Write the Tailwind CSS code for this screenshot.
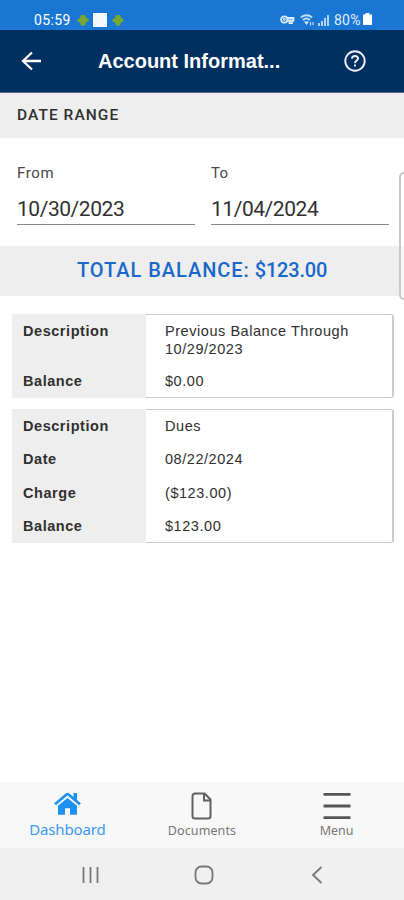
<!DOCTYPE html>
<html lang="en">
<head>
<meta charset="utf-8">
<meta name="viewport" content="width=device-width, initial-scale=1">
<title>Account Information</title>
<script src="https://cdn.jsdelivr.net/npm/@tailwindcss/browser@4"></script>
</head>
<body class="bg-white">
<div class="relative flex h-[900px] w-[404px] flex-col overflow-hidden bg-white font-['Roboto',sans-serif] text-[#303030]">
  <!-- Status bar -->
  <div class="flex h-[30px] shrink-0 items-end bg-[#1976d2] pr-[32px] pl-[34px] text-white">
    <span class="mb-[1px] w-[43px] text-[14px] leading-[18px] tracking-[0.4px]">05:59</span>
    <svg class="mb-[4px] h-[12px] w-[12px]" viewBox="0 0 12 12"><path d="M4 1h4l1 2.500 3 2.500v1L9 8.500 8 11.500H4L3 8.500 0 7V6l3-2.500z" fill="#76a832"/></svg>
    <div class="mb-[3px] ml-[4px] h-[14px] w-[14px] bg-[#f2f6ff]"></div>
    <svg class="mb-[4px] ml-[5px] h-[12px] w-[12px]" viewBox="0 0 12 12"><path d="M4 1h4l1 2.500 3 2.500v1L9 8.500 8 11.500H4L3 8.500 0 7V6l3-2.500z" fill="#76a832"/></svg>
    <svg class="mb-[6px] ml-auto h-[9px] w-[15px]" viewBox="0 0 15 9" fill="none" stroke="#dcecff" stroke-width="1.800"><circle cx="4.300" cy="4.500" r="3.200"/><circle cx="4.300" cy="4.500" r=".5"/><path d="M7 3h6.500v2.500H7.500M12 5v3.200H9.500V5"/></svg>
    <svg class="mb-[4px] ml-[5px] h-[12px] w-[15px]" viewBox="0 0 15 12" fill="none" stroke="#c5dcf8" stroke-width="1.700"><path d="M.8 3.500Q6.500-1 12.200 3.500M3 6Q6.500 3 10 6"/><path d="M4 7.500h5L6.500 11z" fill="#dcecff" stroke="none"/><path d="M10.500 8v3.500M13 8v3" stroke-width="1.200"/></svg>
    <svg class="mb-[4px] ml-[3px] h-[12px] w-[12px]" viewBox="0 0 12 12" fill="#b4d2f5"><path d="M0 9h2v3H0zM3 7h2v5H3zM6 4h2v8H6zM9 1h2v11H9z"/></svg>
    <span class="mb-[1px] ml-[4px] w-[29px] text-[14px] leading-[18px] tracking-[0.200px] text-[#e2efff]">80%</span>
    <svg class="mb-[5px] h-[12px] w-[9px]" viewBox="0 0 9 12" fill="#fff"><path d="M2.500 0h4v1.500H9V12H0V1.500h2.500z"/></svg>
  </div>
  <!-- App bar -->
  <header class="flex h-[63px] shrink-0 items-center border-b border-[#5b6784] bg-[#003060] pr-[38px] pl-[21px] text-white">
    <svg class="h-[20px] w-[21px]" viewBox="0 0 21 20" fill="none" stroke="#fff" stroke-width="2.300"><path d="M20 10H2M11 1.500L2 10l9 8.500"/></svg>
    <h1 class="ml-[56px] pb-[1px] font-['Liberation_Sans',sans-serif] text-[20px] font-bold whitespace-nowrap">Account Informat...</h1>
    <svg class="ml-auto h-[22px] w-[22px]" viewBox="0 0 22 22" fill="none" stroke="#f0f0ff" stroke-width="1.900"><circle cx="11" cy="11" r="9.700"/><path d="M8 8.800Q8 6 11 6t3 2.600c0 2-3 2-3 4.600M11 14.500v2"/></svg>
  </header>
  <div class="flex h-[45px] shrink-0 items-center bg-[#eee] pt-[1px] pl-[17px] text-[15.500px] font-medium tracking-[1.050px]">DATE RANGE</div>
  <!-- Date fields -->
  <section class="flex h-[108px] shrink-0 gap-[16px] pt-[25px] pl-[17px]">
    <label class="block w-[178px]">
      <span class="block text-[15px] leading-[20px] tracking-[0.600px] text-[#484848]">From</span>
      <span class="mt-[10px] flex h-[32px] items-center border-b border-[#888] pt-[2px] text-[21px] tracking-[-0.450px]">10/30/2023</span>
    </label>
    <label class="block w-[178px]">
      <span class="block text-[15px] leading-[20px] tracking-[0.200px] text-[#484848]">To</span>
      <span class="mt-[10px] flex h-[32px] items-center border-b border-[#888] pt-[2px] text-[21px] tracking-[-0.450px]">11/04/2024</span>
    </label>
  </section>
  <div class="flex h-[50px] shrink-0 items-center bg-[#eee] pb-[2px] pl-[77px] text-[20px] font-medium text-[#1968ca]"><span class="tracking-[0.950px]">TOTAL BALANCE:</span><span class="ml-[5px] tracking-[-0.200px]">$123.00</span></div>
  <!-- Transactions -->
  <main class="flex flex-1 flex-col gap-[12px] pt-[18px] pr-[10px] pl-[12px] font-['Liberation_Sans',sans-serif] text-[14.500px] leading-[18px] tracking-[0.550px]">
    <div class="flex h-[84px] rounded-r-[3px] border-y border-r-2 border-[#ccc] border-l-0">
      <dl class="-my-px grid w-full grid-cols-[134px_1fr] grid-rows-[50px_34px]">
        <dt class="bg-[#eee] pt-[8px] pl-[11px] font-bold">Description</dt><dd class="pt-[8px] pl-[19px]">Previous Balance Through<br>10/29/2023</dd>
        <dt class="bg-[#eee] pt-[8px] pl-[11px] font-bold">Balance</dt><dd class="pt-[8px] pl-[19px]">$0.00</dd>
      </dl>
    </div>
    <div class="-mt-px flex h-[134px] rounded-r-[3px] border-y border-r-2 border-[#ccc] border-l-0">
      <dl class="-my-px grid w-full grid-cols-[134px_1fr] grid-rows-[33px_34px_33px_34px]">
        <dt class="bg-[#eee] pt-[8px] pl-[11px] font-bold">Description</dt><dd class="pt-[8px] pl-[19px]">Dues</dd>
        <dt class="bg-[#eee] pt-[8px] pl-[11px] font-bold">Date</dt><dd class="pt-[8px] pl-[19px]">08/22/2024</dd>
        <dt class="bg-[#eee] pt-[8px] pl-[11px] font-bold">Charge</dt><dd class="pt-[8px] pl-[19px]">($123.00)</dd>
        <dt class="bg-[#eee] pt-[8px] pl-[11px] font-bold">Balance</dt><dd class="pt-[8px] pl-[19px]">$123.00</dd>
      </dl>
    </div>
  </main>
  <!-- Tab bar -->
  <nav class="grid h-[66px] shrink-0 grid-cols-3 bg-[#f8f8f8] font-['Noto_Sans',sans-serif] text-[#777]">
    <div class="flex flex-col items-center pt-[10px] text-[#3b98f5]">
      <svg class="h-[23px] w-[27px]" viewBox="0 0 27 23" fill="#1e90f0"><path d="M4 13.800L13.500 6 23 13.800V22a.8.8 0 0 1-.8.8H16v-6.500h-5v6.500H4.800A.8.800 0 0 1 4 22z"/><path d="M1 12.200L12.500 2.500q1-.8 2 0L26 12.200" fill="none" stroke="#1e90f0" stroke-width="2.800"/><path d="M19.500 1h3.500v9l-3.500-3z"/></svg>
      <span class="mt-[4px] text-[15px] leading-[20px] tracking-[-0.150px]">Dashboard</span>
    </div>
    <div class="flex flex-col items-center pt-[10px]">
      <svg class="h-[28px] w-[21px]" viewBox="0 0 21 28" fill="none" stroke="#606060" stroke-width="2"><path d="M4 1.500h9.500l6 6V24a2.500 2.500 0 0 1-2.500 2.500H4A2.500 2.500 0 0 1 1.500 24V4A2.500 2.500 0 0 1 4 1.500z"/><path d="M13 2v6.500h6" stroke-width="2"/></svg>
      <span class="mt-[3px] text-[12.500px] leading-[16px] tracking-[0.100px]">Documents</span>
    </div>
    <div class="flex flex-col items-center pt-[10px]">
      <svg class="h-[28px] w-[28px]" viewBox="0 0 28 28" stroke="#555" stroke-width="2.800"><path d="M.5 2.300h27M.5 14h27M.5 25.700h27"/></svg>
      <span class="mt-[3px] text-[12.500px] leading-[16px]">Menu</span>
    </div>
  </nav>
  <!-- System navigation -->
  <div class="flex h-[52px] shrink-0 items-center bg-[#f0f0f0] pt-[2px] pl-[81px]">
    <svg class="h-[18px] w-[20px]" viewBox="0 0 20 18" stroke="#777" stroke-width="1.800"><path d="M2.500 1v16M9.500 1v16M16.500 1v16"/></svg>
    <svg class="ml-[93px] h-[20px] w-[20px]" viewBox="0 0 20 20" fill="none" stroke="#777" stroke-width="1.800"><rect x="1.500" y="1.500" width="17" height="17" rx="6"/></svg>
    <svg class="ml-[97px] h-[18px] w-[12px]" viewBox="0 0 12 18" fill="none" stroke="#777" stroke-width="1.800"><path d="M10.500 1L2 9l8.500 8"/></svg>
  </div>
  <!-- Edge panel handle -->
  <div class="absolute top-[172px] left-[399px] h-[128px] w-[12px] rounded-l-[5px] border-2 border-[#c8c8c8] bg-white/50"></div>
</div>
</body>
</html>
